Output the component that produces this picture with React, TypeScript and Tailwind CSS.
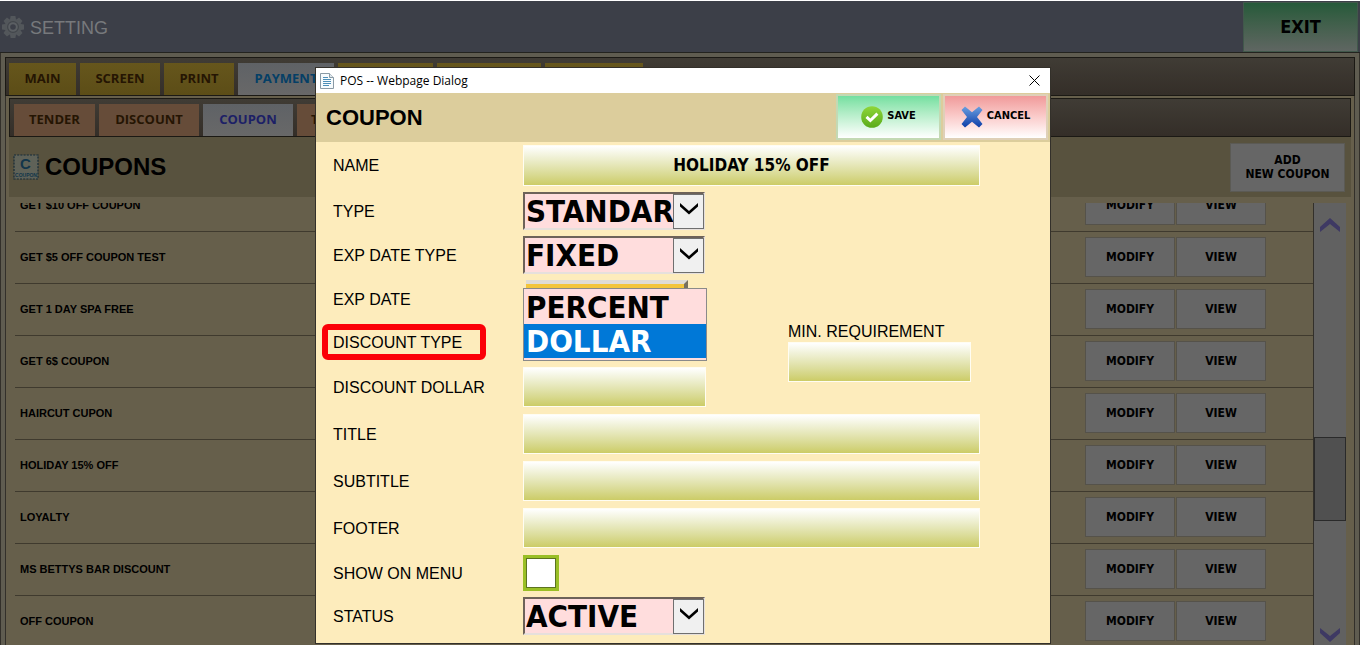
import { useState } from "react";
import type { ReactNode } from "react";

const MAIN_TABS = ["MAIN", "SCREEN", "PRINT", "PAYMENT", "", "", ""];
const MAIN_TAB_WIDTHS = ["w-[67px]", "w-20", "w-[70px]", "w-24", "w-[95px]", "w-[104px]", "w-[98px]"];
const SUB_TABS = ["TENDER", "DISCOUNT", "COUPON", "T"];
const SUB_TAB_WIDTHS = ["w-[81px]", "w-[100px]", "w-[90px]", "w-20"];

const COUPONS = [
  "GET $10 OFF COUPON",
  "GET $5 OFF COUPON TEST",
  "GET 1 DAY SPA FREE",
  "GET 6$ COUPON",
  "HAIRCUT CUPON",
  "HOLIDAY 15% OFF",
  "LOYALTY",
  "MS BETTYS BAR DISCOUNT",
  "OFF COUPON",
];

const TAHOMA = "font-['DejaVu_Sans_Condensed','DejaVu_Sans',sans-serif]";

function GearIcon() {
  return (
    <svg viewBox="0 0 24 24" className="h-6 w-6 shrink-0" aria-hidden="true">
      <g fill="#53575b">
        {[0, 45, 90, 135, 180, 225, 270, 315].map((a) => (
          <path key={a} d="M9.600 1h4.800l.8 4.500H8.800z" transform={`rotate(${a} 12 12)`} />
        ))}
        <circle cx="12" cy="12" r="8" />
      </g>
      <circle cx="12" cy="12" r="5.4" fill="#5b5f63" stroke="#42464b" strokeWidth="1.2" />
      <circle cx="12" cy="12" r="2.8" fill="#3c3f48" />
    </svg>
  );
}

function CouponIcon() {
  return (
    <svg viewBox="0 0 26 26" className="h-[26px] w-[26px] shrink-0" aria-hidden="true">
      <rect x="1" y="1" width="24" height="24" fill="#5f6258" stroke="#142a38" strokeWidth="1.2" strokeDasharray="2 1.2" />
      <text x="12.5" y="15" textAnchor="middle" fontFamily="Liberation Sans, sans-serif" fontWeight="700" fontSize="15" fill="#12354a">C</text>
      <text x="13" y="22.5" textAnchor="middle" fontFamily="Liberation Sans, sans-serif" fontWeight="700" fontSize="5" fill="#12354a">COUPON</text>
    </svg>
  );
}

function PageIcon() {
  return (
    <svg viewBox="0 0 14 16" className="h-4 w-3.5 shrink-0" aria-hidden="true">
      <path d="M.5.5h9l4 4v11H.5z" fill="#f7fbfd" stroke="#8a9aa5" />
      <path d="M9.5.5v4h4" fill="#dfe8ee" stroke="#8a9aa5" />
      <path d="M3 4.5h5M3 6.5h8M3 8.5h8M3 10.5h8M3 12.5h6" stroke="#4d8fb8" />
    </svg>
  );
}

function SaveIcon() {
  return (
    <svg viewBox="0 0 22 22" className="h-[22px] w-[22px]" aria-hidden="true">
      <defs>
        <linearGradient id="save" x1="0" y1="0" x2="0" y2="1">
          <stop offset="0" stopColor="#8fd63a" />
          <stop offset="1" stopColor="#5aab1a" />
        </linearGradient>
      </defs>
      <circle cx="11" cy="11" r="10.8" fill="url(#save)" />
      <path d="M5.500 10.800l3.900 3.700 7-6.800" fill="none" stroke="#fff" strokeWidth="3" />
    </svg>
  );
}

function CancelIcon() {
  return (
    <svg viewBox="0 0 22 22" className="h-[22px] w-[22px]" aria-hidden="true">
      <defs>
        <linearGradient id="cancel" x1="0" y1="0" x2="0" y2="1">
          <stop offset="0" stopColor="#6a9fe0" />
          <stop offset="1" stopColor="#0c3da8" />
        </linearGradient>
      </defs>
      <path d="M.5 4L4 .5l7 5.800 7-5.800L21.500 4 16 11l5.500 7-3.500 3.500-7-5.800-7 5.800L.5 18 6 11z" fill="url(#cancel)" />
    </svg>
  );
}

function ScrollArrow({ down = false }: { down?: boolean }) {
  return (
    <svg viewBox="0 0 20 16" className="h-4 w-5" aria-hidden="true">
      <path d={down ? "M0 1v5l10 9 10-9V1l-10 8z" : "M0 15v-5L10 1l10 9v5L10 7z"} fill="#3e3963" />
    </svg>
  );
}

function Label({ htmlFor, row, children }: { htmlFor: string; row: string; children: ReactNode }) {
  return (
    <label htmlFor={htmlFor} className={`col-start-1 ${row} self-center justify-self-start pt-0.5 text-base leading-5`}>
      {children}
    </label>
  );
}

function TextField({ id, place, height, value = "" }: { id: string; place: string; height: string; value?: string }) {
  return (
    <input
      id={id}
      type="text"
      defaultValue={value}
      className={`${place} ${height} ${TAHOMA} w-full min-w-0 self-center border border-[#fffdf2] bg-linear-to-b from-white to-[#cccc66] bg-clip-padding text-center text-[17px] font-bold outline-none`}
    />
  );
}

function SelectField({ id, row, options }: { id: string; row: string; options: string[] }) {
  return (
    <div className={`relative col-start-2 ${row} h-[38px] w-[182px] self-center`}>
      <select
        id={id}
        className={`${TAHOMA} h-full w-full appearance-none border-2 border-t-[#6d6259] border-r-[#e6e0dc] border-b-[#e6e0dc] border-l-[#6d6259] bg-[#ffdddd] pr-[30px] pl-px text-[31px] leading-8 font-bold outline-none`}
      >
        {options.map((o) => (
          <option key={o}>{o}</option>
        ))}
      </select>
      <span className="pointer-events-none absolute top-0.5 right-px flex h-[35px] w-[31px] items-center justify-center border border-[#6f6f6f] bg-[#f0f0f0] pb-1">
        <svg viewBox="0 0 20 14" className="h-3.5 w-5" aria-hidden="true">
          <path d="M1 1l9 8 9-8v3.500l-9 8-9-8z" fill="#000" />
        </svg>
      </span>
    </div>
  );
}

function CouponDialog() {
  const [discount, setDiscount] = useState("DOLLAR");
  return (
    <section
      role="dialog"
      aria-label="Coupon"
      className="w-[734px] max-w-full bg-[#fdecbc] text-black shadow-[0_0_0_1px_#33302a]"
    >
      <div className="flex h-[25px] items-center bg-white pr-2 pl-1">
        <PageIcon />
        <span className="pl-1.5 font-['Open_Sans',sans-serif] text-xs">POS -- Webpage Dialog</span>
        <button type="button" aria-label="Close" className="ml-auto p-0.5">
          <svg viewBox="0 0 11 11" className="h-[11px] w-[11px]" aria-hidden="true">
            <path d="M.5.5l10 10M10.500.5l-10 10" stroke="#000" fill="none" />
          </svg>
        </button>
      </div>
      <header className="flex h-[49px] items-center bg-[#dccd9c] pr-0.5 pb-0.5 pl-2.5">
        <h2 className="pt-px text-[22px] font-bold">COUPON</h2>
        <div className={`${TAHOMA} ml-auto flex gap-0.5 text-[11px] font-bold`}>
          <button type="button" className="flex h-[46px] w-[105px] items-center justify-center gap-1 border-2 border-[#c3d9b4] bg-linear-to-b from-[#73dfa0] to-white">
            <SaveIcon />
            SAVE
          </button>
          <button type="button" className="flex h-[46px] w-[105px] items-center justify-center gap-1 border-2 border-[#dfd0b8] bg-linear-to-b from-[#f09a9a] to-white">
            <CancelIcon />
            CANCEL
          </button>
        </div>
      </header>
      <form className="grid grid-cols-[190px_265px_192px_1fr] grid-rows-[46px_45px_44px_43px_44px_46px_47px_47px_47px_43px_43px] pb-1.5 pl-[17px]">
        <Label htmlFor="name" row="row-start-1">NAME</Label>
        <TextField id="name" place="col-start-2 col-span-2 row-start-1" height="h-[41px]" value="HOLIDAY 15% OFF" />

        <Label htmlFor="type" row="row-start-2">TYPE</Label>
        <SelectField id="type" row="row-start-2" options={["STANDARD"]} />

        <Label htmlFor="exp-type" row="row-start-3">EXP DATE TYPE</Label>
        <SelectField id="exp-type" row="row-start-3" options={["FIXED"]} />

        <Label htmlFor="exp-date" row="row-start-4">EXP DATE</Label>
        <button
          id="exp-date"
          type="button"
          aria-label="Pick date"
          className="col-start-2 row-start-4 ml-[3px] h-[38px] w-[162px] self-center border-t-4 border-r-4 border-t-[#dfdcd6] border-r-[#77705f] bg-[#f3c53c]"
        />

        <div className="relative col-start-1 row-start-5 flex items-center">
          <label htmlFor="discount-type" className="pt-0.5 text-base leading-5">DISCOUNT TYPE</label>
          <span className="pointer-events-none absolute top-1 -left-[11px] h-9 w-[164px] rounded-md border-6 border-[#fb0007]" />
        </div>
        <div className="relative col-start-2 row-start-5">
          <ul
            id="discount-type"
            role="listbox"
            aria-label="Discount type"
            className={`${TAHOMA} absolute bottom-[3px] left-0 w-[184px] border border-[#8a8a8a] bg-[#ffdddd] pt-px pb-0.5 text-[31px] font-bold`}
          >
            {["PERCENT", "DOLLAR"].map((o) => (
              <li
                key={o}
                role="option"
                aria-selected={o === discount}
                onClick={() => setDiscount(o)}
                className="h-[34px] pl-0.5 leading-[34px] aria-selected:bg-[#0078d7] aria-selected:text-white"
              >
                {o}
              </li>
            ))}
          </ul>
        </div>
        <div className="col-start-3 row-span-2 row-start-5 flex w-[183px] flex-col pt-0.5">
          <label htmlFor="min" className="text-base leading-5 whitespace-nowrap">MIN. REQUIREMENT</label>
          <TextField id="min" place="" height="h-10" />
        </div>

        <Label htmlFor="dollar" row="row-start-6">DISCOUNT DOLLAR</Label>
        <div className="col-start-2 row-start-6 flex w-[183px] items-center">
          <TextField id="dollar" place="" height="h-10" />
        </div>

        <Label htmlFor="title" row="row-start-7">TITLE</Label>
        <TextField id="title" place="col-start-2 col-span-2 row-start-7" height="h-10" />

        <Label htmlFor="subtitle" row="row-start-8">SUBTITLE</Label>
        <TextField id="subtitle" place="col-start-2 col-span-2 row-start-8" height="h-10" />

        <Label htmlFor="footer" row="row-start-9">FOOTER</Label>
        <TextField id="footer" place="col-start-2 col-span-2 row-start-9" height="h-10" />

        <Label htmlFor="show" row="row-start-10">SHOW ON MENU</Label>
        <input
          id="show"
          type="checkbox"
          className="col-start-2 row-start-10 h-9 w-9 appearance-none self-center border-3 border-[#9abf25] bg-white shadow-[inset_0_0_0_1px_#5c7320] checked:bg-[#9abf25]"
        />

        <Label htmlFor="status" row="row-start-11">STATUS</Label>
        <SelectField id="status" row="row-start-11" options={["ACTIVE"]} />
      </form>
    </section>
  );
}

export default function App() {
  return (
    <div className="relative flex h-screen flex-col overflow-hidden border-t border-white bg-[#5f5c50] font-['Liberation_Sans',Arial,sans-serif] text-black">
      <header className="flex h-[52px] shrink-0 items-center border-b border-[#23231f] bg-[#3c3f48] pr-0.5 pl-px">
        <GearIcon />
        <h1 className="pt-0.5 pl-[5px] text-lg text-[#77797c]">SETTING</h1>
        <button
          type="button"
          className={`${TAHOMA} ml-auto h-[50px] w-[115px] border border-[#41584b] bg-linear-to-b from-[#255a3a] to-[#5f6662] text-lg font-bold`}
        >
          EXIT
        </button>
      </header>

      <main className="flex min-h-0 flex-1 flex-col border-x border-[#33302a] px-1 pt-1">
        <nav className="flex h-[39px] shrink-0 items-end gap-1 border border-[#1b1914] bg-linear-to-b from-[#403c35] to-[#342e28] pl-[3px] font-['Open_Sans',sans-serif] text-[13px] font-bold">
          {MAIN_TABS.map((t, i) => (
            <button
              key={i}
              type="button"
              className={`h-8 shrink-0 ${MAIN_TAB_WIDTHS[i]} ${
                t === "PAYMENT"
                  ? "bg-linear-to-b from-[#5f6266] to-[#686868] text-[#053f66]"
                  : "bg-linear-to-b from-[#66561c] to-[#5c4d17] text-[#251503]"
              }`}
            >
              {t}
            </button>
          ))}
        </nav>

        <div className="flex min-h-0 flex-1 flex-col border-x border-[#33302a] bg-[#665f4b] px-[3px] pt-0.5">
          <nav className="flex h-[39px] shrink-0 items-end gap-1 border border-[#1b1914] bg-linear-to-b from-[#403c35] to-[#342e28] pl-1 font-['Open_Sans',sans-serif] text-[13px] font-bold">
            {SUB_TABS.map((t, i) => (
              <button
                key={t}
                type="button"
                className={`h-8 shrink-0 ${SUB_TAB_WIDTHS[i]} ${
                  t === "COUPON" ? "bg-linear-to-b from-[#5f6266] to-[#686868] text-[#1c2066]" : "bg-[#664c39] text-[#251503]"
                } ${t === "T" ? "pl-3.5 text-left" : ""}`}
              >
                {t}
              </button>
            ))}
          </nav>

          <div className="flex h-[60px] shrink-0 items-center bg-[#58523e] pr-1.5 pl-1">
            <CouponIcon />
            <h2 className="pl-1.5 text-2xl font-bold">COUPONS</h2>
            <button
              type="button"
              className={`${TAHOMA} ml-auto h-[49px] w-[115px] border border-[#5b5a54] bg-[#666666] text-xs leading-3.5 font-bold`}
            >
              ADD
              <br />
              NEW COUPON
            </button>
          </div>

          <div className="mt-1.5 flex min-h-0 flex-1 pr-[5px] pl-1.5">
            <div className="min-w-0 flex-1 overflow-hidden">
              <table className="-mt-6 w-full table-fixed border-collapse">
                <tbody>
                  {COUPONS.map((name) => (
                    <tr key={name} className="h-[52px] border-b border-[#3f3a2e]">
                      <td className="pl-[5px] text-[11px] font-bold">{name}</td>
                      <td className="w-[228px] p-0">
                        <div className={`${TAHOMA} flex gap-px text-xs font-bold`}>
                          <button type="button" className="h-10 w-[90px] border border-[#55524a] bg-[#666666]">MODIFY</button>
                          <button type="button" className="h-10 w-[90px] border border-[#55524a] bg-[#666666]">VIEW</button>
                        </div>
                      </td>
                    </tr>
                  ))}
                </tbody>
              </table>
            </div>
            <div className="flex w-[33px] flex-col items-center border-l border-[#33302a] bg-[#616161]">
              <div className="pt-3.5">
                <ScrollArrow />
              </div>
              <div className="mt-[204px] h-[84px] w-full border border-[#2a2a2a] bg-[#505050]" />
              <div className="mt-auto pb-0.5">
                <ScrollArrow down />
              </div>
            </div>
          </div>
        </div>
      </main>

      <div className="absolute inset-0 flex items-start justify-center pt-[67px] pl-1.5">
        <CouponDialog />
      </div>
    </div>
  );
}
